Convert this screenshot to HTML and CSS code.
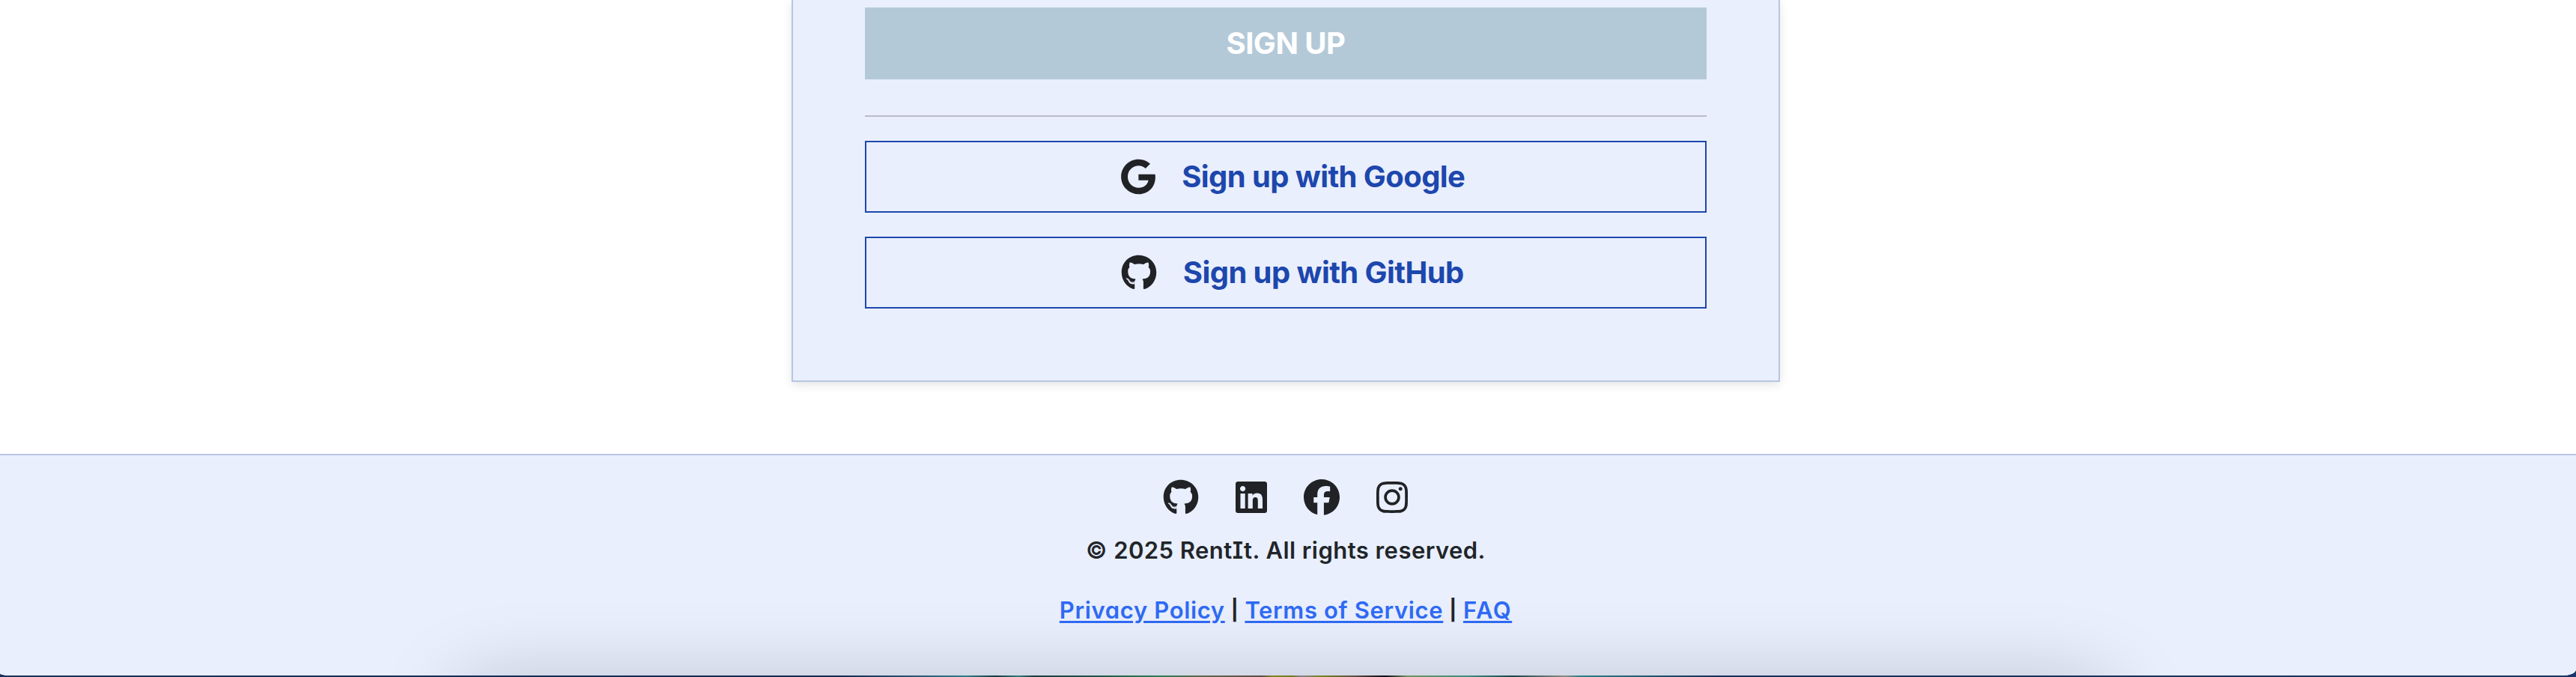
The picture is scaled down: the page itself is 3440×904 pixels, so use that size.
FILE: index.html
```
<!DOCTYPE html>
<html lang="en">
<head>
<meta charset="utf-8">
<title>RentIt</title>
<link rel="stylesheet" href="styles.css">
</head>
<body>
<div class="window">
  <main class="main">
    <section class="card">
      <button class="btn btn-primary" disabled>SIGN UP</button>
      <hr class="rule">
      <button class="btn btn-outline">
        <svg class="icon" viewBox="0 0 488 512"><path d="M488 261.8C488 403.3 391.1 504 248 504 110.8 504 0 393.2 0 256S110.8 8 248 8c66.8 0 123 24.5 166.3 64.9l-67.5 64.9C258.5 52.6 94.3 116.6 94.3 256c0 86.5 69.1 156.6 153.7 156.6 98.2 0 135-70.4 140.8-106.9H248v-85.3h236.1c2.3 12.7 3.9 24.9 3.9 41.4z"/></svg>
        <span>Sign up with Google</span>
      </button>
      <button class="btn btn-outline">
        <svg class="icon" viewBox="0 0 496 512"><path d="M165.9 397.4c0 2-2.3 3.6-5.2 3.6-3.3.3-5.6-1.3-5.6-3.6 0-2 2.3-3.6 5.2-3.6 3-.3 5.6 1.3 5.6 3.6zm-31.1-4.5c-.7 2 1.3 4.3 4.3 4.9 2.6 1 5.6 0 6.2-2s-1.3-4.3-4.3-5.2c-2.6-.7-5.5.3-6.2 2.3zm44.2-1.7c-2.9.7-4.9 2.6-4.6 4.9.3 2 2.9 3.3 5.9 2.6 2.9-.7 4.9-2.6 4.6-4.6-.3-1.9-3-3.2-5.9-2.9zM244.8 8C106.1 8 0 113.3 0 252c0 110.9 69.8 205.8 169.5 239.2 12.8 2.3 17.3-5.6 17.3-12.1 0-6.2-.3-40.4-.3-61.4 0 0-70 15-84.7-29.8 0 0-11.4-29.1-27.8-36.6 0 0-22.9-15.7 1.6-15.4 0 0 24.9 2 38.6 25.8 21.9 38.6 58.6 27.5 72.9 20.9 2.3-16 8.8-27.1 16-33.7-55.9-6.2-112.3-14.3-112.3-110.5 0-27.5 7.6-41.3 23.6-58.9-2.6-6.5-11.1-33.3 2.6-67.9 20.9-6.5 69 27 69 27 20-5.6 41.5-8.5 62.8-8.5s42.8 2.9 62.8 8.5c0 0 48.1-33.6 69-27 13.7 34.7 5.2 61.4 2.6 67.9 16 17.7 25.8 31.5 25.8 58.9 0 96.5-58.9 104.2-114.8 110.5 9.2 7.9 17 22.9 17 46.4 0 33.7-.3 75.4-.3 83.6 0 6.5 4.6 14.4 17.3 12.1C428.2 457.8 496 362.9 496 252 496 113.3 383.5 8 244.8 8zM97.2 352.9c-1.3 1-1 3.3.7 5.2 1.6 1.6 3.9 2.3 5.2 1 1.3-1 1-3.3-.7-5.2-1.6-1.6-3.9-2.3-5.2-1zm-10.8-8.1c-.7 1.3.3 2.9 2.3 3.9 1.6 1 3.6.7 4.3-.7.7-1.3-.3-2.9-2.3-3.9-2-.6-3.6-.3-4.3.7zm32.4 35.6c-1.6 1.3-1 4.3 1.3 6.2 2.3 2.3 5.2 2.6 6.5 1 1.3-1.3.7-4.3-1.3-6.2-2.2-2.3-5.2-2.6-6.5-1zm-11.4-14.7c-1.6 1-1.6 3.6 0 5.9 1.6 2.3 4.3 3.3 5.6 2.3 1.6-1.3 1.6-3.9 0-6.2-1.4-2.3-4-3.3-5.6-2z"/></svg>
        <span>Sign up with GitHub</span>
      </button>
    </section>
  </main>
  <footer class="footer">
    <div class="social">
      <svg class="icon" viewBox="0 0 496 512"><path d="M165.9 397.4c0 2-2.3 3.6-5.2 3.6-3.3.3-5.6-1.3-5.6-3.6 0-2 2.3-3.6 5.2-3.6 3-.3 5.6 1.3 5.6 3.6zm-31.1-4.5c-.7 2 1.3 4.3 4.3 4.9 2.6 1 5.6 0 6.2-2s-1.3-4.3-4.3-5.2c-2.6-.7-5.5.3-6.2 2.3zm44.2-1.7c-2.9.7-4.9 2.6-4.6 4.9.3 2 2.9 3.3 5.9 2.6 2.9-.7 4.9-2.6 4.6-4.6-.3-1.9-3-3.2-5.9-2.9zM244.8 8C106.1 8 0 113.3 0 252c0 110.9 69.8 205.8 169.5 239.2 12.8 2.3 17.3-5.6 17.3-12.1 0-6.2-.3-40.4-.3-61.4 0 0-70 15-84.7-29.8 0 0-11.4-29.1-27.8-36.6 0 0-22.9-15.7 1.6-15.4 0 0 24.9 2 38.6 25.8 21.9 38.6 58.6 27.5 72.9 20.9 2.3-16 8.8-27.1 16-33.7-55.9-6.2-112.3-14.3-112.3-110.5 0-27.5 7.6-41.3 23.6-58.9-2.6-6.5-11.1-33.3 2.6-67.9 20.9-6.5 69 27 69 27 20-5.6 41.5-8.5 62.8-8.5s42.8 2.9 62.8 8.5c0 0 48.1-33.6 69-27 13.7 34.7 5.2 61.4 2.6 67.9 16 17.7 25.8 31.5 25.8 58.9 0 96.5-58.9 104.2-114.8 110.5 9.2 7.9 17 22.9 17 46.4 0 33.7-.3 75.4-.3 83.6 0 6.5 4.6 14.4 17.3 12.1C428.2 457.8 496 362.9 496 252 496 113.3 383.5 8 244.8 8zM97.2 352.9c-1.3 1-1 3.3.7 5.2 1.6 1.6 3.9 2.3 5.2 1 1.3-1 1-3.3-.7-5.2-1.6-1.6-3.9-2.3-5.2-1zm-10.8-8.1c-.7 1.3.3 2.9 2.3 3.9 1.6 1 3.6.7 4.3-.7.7-1.3-.3-2.9-2.3-3.9-2-.6-3.6-.3-4.3.7zm32.4 35.6c-1.6 1.3-1 4.3 1.3 6.2 2.3 2.3 5.2 2.6 6.5 1 1.3-1.3.7-4.3-1.3-6.2-2.2-2.3-5.2-2.6-6.5-1zm-11.4-14.7c-1.6 1-1.6 3.6 0 5.9 1.6 2.3 4.3 3.3 5.6 2.3 1.6-1.3 1.6-3.9 0-6.2-1.4-2.3-4-3.3-5.6-2z"/></svg>
      <svg class="icon" viewBox="0 0 448 512"><path d="M416 32H31.9C14.3 32 0 46.5 0 64.3v383.4C0 465.5 14.3 480 31.9 480H416c17.6 0 32-14.5 32-32.3V64.3c0-17.8-14.4-32.3-32-32.3zM135.4 416H69V202.2h66.5V416zm-33.2-243c-21.3 0-38.5-17.3-38.5-38.5S80.9 96 102.2 96c21.2 0 38.5 17.3 38.5 38.5 0 21.3-17.2 38.5-38.5 38.5zm282.1 243h-66.4V312c0-24.8-.5-56.7-34.5-56.7-34.6 0-39.9 27-39.9 54.9V416h-66.4V202.2h63.7v29.2h.9c8.9-16.8 30.6-34.5 62.9-34.5 67.2 0 79.7 44.3 79.7 101.9V416z"/></svg>
      <svg class="icon" viewBox="0 0 512 512"><path d="M512 256C512 114.6 397.4 0 256 0S0 114.6 0 256C0 376 82.7 476.8 194.2 504.5V334.2H141.4V256h52.8V222.3c0-87.1 39.4-127.5 125-127.5c16.2 0 44.2 3.2 55.7 6.4V172c-6-.6-16.5-1-29.6-1c-42 0-58.2 15.9-58.2 57.2V256h83.6l-14.4 78.2H287V510.1C413.8 494.8 512 386.9 512 256z"/></svg>
      <svg class="icon" viewBox="0 0 448 512"><path d="M224.1 141c-63.6 0-114.9 51.3-114.9 114.9s51.3 114.9 114.9 114.9S339 319.5 339 255.9 287.7 141 224.1 141zm0 189.6c-41.1 0-74.7-33.5-74.7-74.7s33.5-74.7 74.7-74.7 74.7 33.5 74.7 74.7-33.6 74.7-74.7 74.7zm146.4-194.3c0 14.9-12 26.8-26.8 26.8-14.9 0-26.8-12-26.8-26.8s12-26.8 26.8-26.8 26.8 12 26.8 26.8zm76.1 27.2c-1.7-35.9-9.9-67.7-36.2-93.9-26.2-26.2-58-34.4-93.9-36.2-37-2.1-147.9-2.1-184.9 0-35.8 1.7-67.6 9.9-93.9 36.1s-34.4 58-36.2 93.9c-2.1 37-2.1 147.9 0 184.9 1.7 35.9 9.9 67.7 36.2 93.9s58 34.4 93.9 36.2c37 2.1 147.9 2.1 184.9 0 35.9-1.7 67.7-9.9 93.9-36.2 26.2-26.2 34.4-58 36.2-93.9 2.1-37 2.1-147.8 0-184.8zM398.8 388c-7.8 19.6-22.9 34.7-42.6 42.6-29.5 11.7-99.5 9-132.1 9s-102.7 2.6-132.1-9c-19.6-7.8-34.7-22.9-42.6-42.6-11.7-29.5-9-99.5-9-132.1s-2.6-102.7 9-132.1c7.8-19.6 22.9-34.7 42.6-42.6 29.5-11.7 99.5-9 132.1-9s102.7-2.6 132.1 9c19.6 7.8 34.7 22.9 42.6 42.6 11.7 29.5 9 99.5 9 132.1s2.7 102.7-9 132.1z"/></svg>
    </div>
    <p class="copyright">© 2025 RentIt. All rights reserved.</p>
    <p class="links"><a class="link" href="#">Privacy Policy</a><span class="bar">|</span><a class="link" href="#">Terms of Service</a><span class="bar">|</span><a class="link link-faq" href="#">FAQ</a></p>
    <div class="dock-shadow"></div>
  </footer>
</div>
</body>
</html>
```
FILE: styles.css
```
* { box-sizing: border-box; }

body {
  margin: 0;
  height: 904px;
  overflow: hidden;
  font-family: Inter, "Liberation Sans", sans-serif;
  color: #212529;
  /* desktop wallpaper seen under the window */
  background: linear-gradient(90deg, #16305c 0, #122a54 1120px, #285a78 1230px, #2b7f8a 1290px, #173a44 1330px, #2a7d7c 1360px, #1a3c40 1380px, #1d5448 1460px, #2b7f55 1550px, #62654a 1610px, #5b4c46 1685px, #7f8a20 1700px, #6f7a1c 1725px, #8a8090 1738px, #75851c 1765px, #5b4c46 1810px, #0c0a14 1850px, #6f9560 1880px, #3b9080 1960px, #17454a 2020px, #8a8c86 2090px, #2a8088 2110px, #16305c 2290px, #173466 100%);
}

.window {
  height: 902px;
  overflow: hidden;
  background: #fff;
  border-radius: 0 0 18px 12px / 0 0 8px 3px;
}

.main {
  height: 606px;
  padding-right: 6px;
  display: flex;
  justify-content: center;
  align-items: flex-start;
}

.card {
  width: 1320px;
  height: 510px;
  padding: 10px 96px 96px;
  display: flex;
  flex-direction: column;
  background: #e9effd;
  border: 2px solid #b8c5e3;
  border-top: 0;
  box-shadow: 0 4px 12px rgba(0, 0, 0, 0.1);
}

.btn {
  height: 96px;
  flex: none;
  display: flex;
  align-items: center;
  justify-content: center;
  gap: 34.5px;
  padding: 0;
  border: 0;
  border-radius: 0;
  font: 700 40px/48px Inter, "Liberation Sans", sans-serif;
  letter-spacing: -0.5px;
}

.btn-primary {
  background: #b4c9d8;
  color: #fff;
}

.btn-outline {
  padding-left: 18px;
  background: transparent;
  border: 2px solid #1d47ad;
  color: #1d47ad;
  font-weight: 650;
  letter-spacing: -0.58px;
}

.btn-outline + .btn-outline { margin-top: 32px; }

.rule {
  width: 100%;
  height: 2px;
  margin: 48px 0 32px;
  border: 0;
  background: #b9bcc9;
}

.icon {
  width: 48px;
  height: 48px;
  flex: none;
  fill: #212226;
}

.footer {
  position: relative;
  height: 296px;
  padding: 32px 6px 0 0;
  background: #e9effd;
  border-top: 2px solid #b8c5e3;
  font-weight: 600;
  font-size: 31px;
  line-height: 48px;
  font-feature-settings: "cv08", "cv11";
}

.social {
  display: flex;
  justify-content: center;
  gap: 46.3px;
  padding-left: 2px;
}

.copyright,
.links {
  margin: 0;
  display: flex;
  justify-content: center;
  white-space: pre;
}

.copyright { margin-top: 23px; letter-spacing: 0.45px; }
.links { margin-top: 32px; gap: 8px; letter-spacing: 0.65px; }

.bar { font-size: 27px; font-weight: 700; }

.link {
  color: #2f6bf5;
  text-decoration: underline;
  text-decoration-thickness: 3px;
  text-underline-offset: 3px;
}

.link-faq { letter-spacing: 1.5px; }

.dock-shadow {
  position: absolute;
  left: 610px;
  top: 306px;
  width: 2210px;
  height: 100px;
  border-radius: 40px;
  box-shadow: 0 0 110px rgba(0, 0, 0, 0.22);
}
```
